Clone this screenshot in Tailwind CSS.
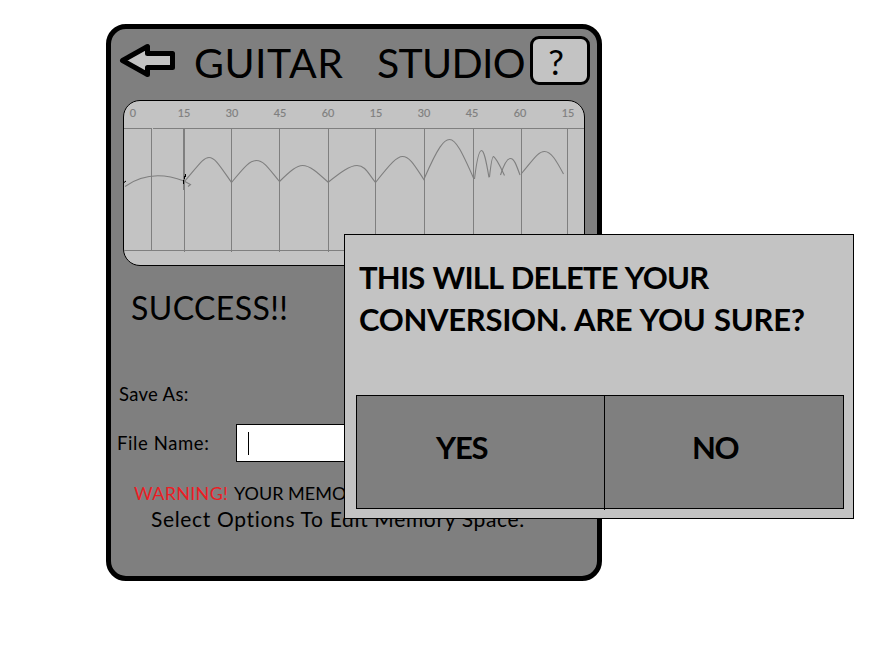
<!DOCTYPE html>
<html lang="en">
<head>
<meta charset="utf-8">
<title>Guitar Studio</title>
<script src="https://cdn.jsdelivr.net/npm/@tailwindcss/browser@4"></script>
</head>
<body class="bg-white w-[877px] h-[648px] overflow-hidden relative text-black font-['Lato','Liberation_Sans',sans-serif]">
<main class="ml-[106px] pt-6">
  <section class="w-[496px] h-[557px] border-5 border-black rounded-[20px] bg-[#7f7f7f] flex flex-col">
    <header class="h-[71px] flex items-start pl-2">
      <svg class="mt-3 w-[58px] h-10 shrink-0" viewBox="119 41 58 40" fill="#c3c3c3" stroke="#000" stroke-width="5" stroke-linejoin="round">
        <path d="M122.500 60.500L147.500 46.500V53.500H172.500V67.500H147.500V74.500Z"/>
      </svg>
      <h1 class="ml-[17px] w-[336px] h-[68px] leading-[68px] text-[41px] whitespace-nowrap flex"><span class="w-[183px] tracking-[0.5px]">GUITAR</span><span class="tracking-[-0.7px]">STUDIO</span></h1>
      <button class="mt-[7px] w-[60px] h-[49px] shrink-0 border-3 border-black rounded-[9px] bg-[#c3c3c3] text-[35px] leading-[42px] text-center pr-2">?</button>
    </header>
    <div class="ml-3 w-[462px] h-[166px] shrink-0 border border-black rounded-[17px] bg-[#c3c3c3] overflow-hidden">
      <svg class="w-[460px] h-[164px] block" viewBox="124 101 460 164" fill="none" stroke="#7f7f7f" stroke-width="1">
        <g shape-rendering="crispEdges">
          <path d="M124 128.5H152M153 128.5H584M124 250.5H584"/>
          <path d="M151.5 128V251M184.5 128V252M231.5 128V252M279.5 128V252M328.5 128V252M375.5 128V252M424.5 128V252M473.5 128V252M521.5 128V252M567.5 128V252"/>
          <path d="M183.5 128V190"/>
        </g>
        <g stroke-width="1.1">
          <path d="M125 186.500C144 173 163 173 184 181L190.500 184.500L188 186.500"/>
          <path d="M184 182C201 162 204 157.500 209 157.500C215 157.500 220 166 231.500 182.500"/>
          <path d="M231.500 182.500C245 166 250 160.500 256.500 160.500C264 160.500 269 169 279.500 181.500"/>
          <path d="M279.500 181.500C291 170 297 165.500 302.500 165.500C310 165.500 317 172 328.500 182.500"/>
          <path d="M328.500 182C341 172 350 165.500 357 165.500C365 165.500 368 173 375.500 182.500"/>
          <path d="M375.500 182.500C391 163 397 156.500 402.500 156.500C410 156.500 415 166 424.500 180.500"/>
          <path d="M424.500 178C438 147 444 139.500 449.500 139.500C456 139.500 462 152 473.500 178"/>
          <path d="M474.500 179C477 158 479 150.500 481.500 150.500C484 150.500 486 160 489 177.500"/>
          <path d="M489.500 177C491 163 492 156.500 493.500 156.500C497 159 500 166 504.500 175.500"/>
          <path d="M500.500 175C504 164 507 158.500 510.500 158.500C514 158.500 516 164 520 175"/>
          <path d="M521.500 173.500C533 160 538 151.500 544.500 151.500C551 151.500 556 160 563.500 174"/>
        </g>
        <path d="M185.500 174V177M184.500 176V179M183.500 180V184M124 182.500L126 181" stroke="#000"/>
        <g fill="#7f7f7f" stroke="#7f7f7f" stroke-width="0.2" font-size="10.8" text-anchor="middle">
          <text x="133" y="117.300">0</text><text x="184" y="117.300">15</text><text x="232" y="117.300">30</text><text x="280" y="117.300">45</text><text x="328" y="117.300">60</text><text x="376" y="117.300">15</text><text x="424" y="117.300">30</text><text x="472" y="117.300">45</text><text x="520" y="117.300">60</text><text x="568" y="117.300">15</text>
        </g>
      </svg>
    </div>
    <h2 class="mt-[22px] ml-5 h-10 leading-10 text-[32px] tracking-[0.4px] whitespace-nowrap">SUCCESS!!</h2>
    <p class="mt-[56px] ml-2 h-5 leading-5 text-[18.5px] tracking-[0.3px] whitespace-nowrap">Save As:</p>
    <div class="mt-5 h-[38px] shrink-0 flex items-center pl-[6px]">
      <label class="w-[119px] pt-[2px] text-[18.5px] tracking-[0.6px] whitespace-nowrap">File Name:</label>
      <div class="w-[300px] h-[38px] border border-black bg-white flex items-center pl-[11px]"><i class="block w-px h-[23px] bg-black"></i></div>
    </div>
    <p class="mt-[21px] ml-[23px] h-5 leading-5 text-[18px] whitespace-nowrap"><span class="inline-block w-[100px] tracking-[0.3px] text-[#ed1c24]">WARNING!</span><span>YOUR MEMORY</span></p>
    <p class="mt-[5px] ml-10 h-[22px] leading-[22px] text-[21px] tracking-[0.66px] whitespace-nowrap">Select Options To Edit Memory Space.</p>
  </section>
</main>
<div role="dialog" class="absolute left-[344px] top-[234px] w-[510px] h-[285px] border border-black bg-[#c3c3c3] pt-[21px] pl-[11px] font-bold text-[31px]">
  <p class="pl-[3px] h-[139px] leading-[42px] whitespace-nowrap"><span class="block tracking-[-0.8px] [word-spacing:1.6px]">THIS WILL DELETE YOUR</span><span class="block tracking-[-0.3px] [word-spacing:1.3px]">CONVERSION. ARE YOU SURE?</span></p>
  <div class="w-[488px] h-[114px] border border-black bg-[#7f7f7f] flex items-start text-left">
    <button class="w-[248px] h-[114px] border-r border-black text-left pl-[79px] pb-[11px] tracking-[-1.2px]">YES</button>
    <button class="w-[238px] h-[112px] text-left pl-[87px] pb-[9px] tracking-[-1.5px]">NO</button>
  </div>
</div>
</body>
</html>
